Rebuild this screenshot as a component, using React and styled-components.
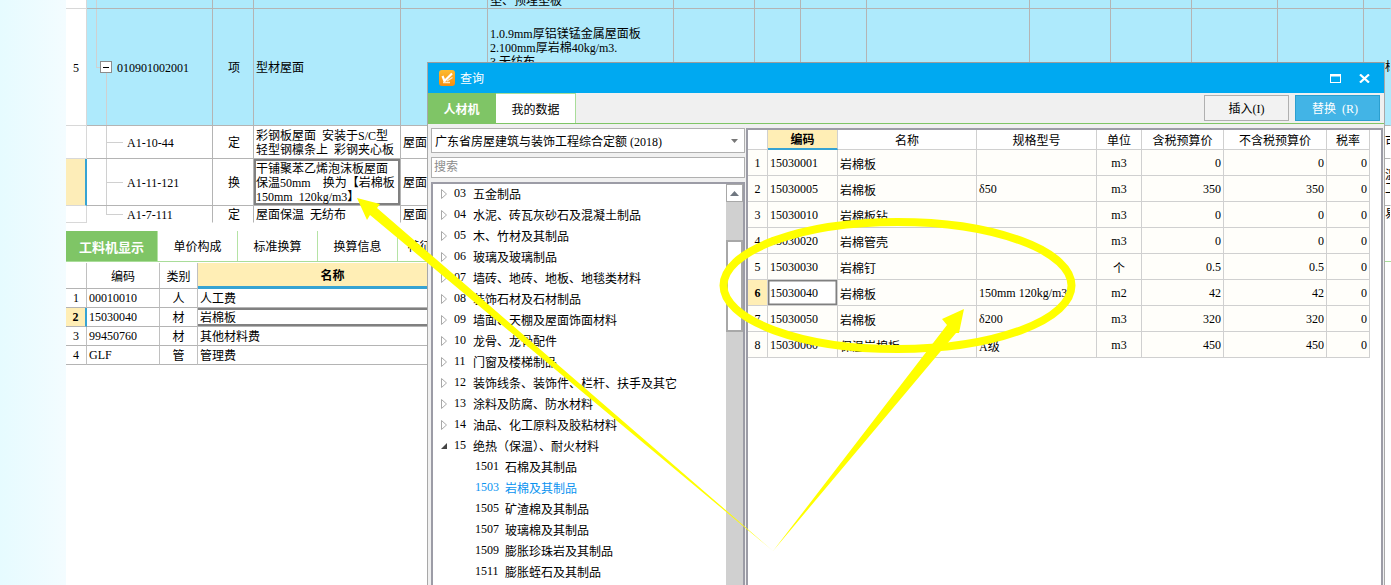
import React from "react";
import styled, { createGlobalStyle } from "styled-components";

const GlobalStyle = createGlobalStyle`
  html, body {
    margin: 0;
    padding: 0;
    overflow: hidden;
    background: #ffffff;
  }
  * {
    box-sizing: border-box;
  }
`;

const Page = styled.div`
  position: relative;
  display: flex;
  width: 1391px;
  height: 585px;
  overflow: hidden;
  font-family: "Liberation Serif", "Noto Sans CJK SC", serif;
  font-size: 12px;
  color: #000;
`;

const SideStrip = styled.div`
  width: 66px;
  flex: none;
  background: linear-gradient(90deg, #e6fbff, #f3fcff);
`;

const Main = styled.div`
  flex: 1;
  min-width: 0;
  display: flex;
  flex-direction: column;
  background: #fff;
`;

/* upper table behind the dialog */
const TopRow = styled.div`
  display: grid;
  grid-template-columns: 21px 126px 41px 147px 87px 186px 81px 46px 66px 163px 81px 81px 86px 86px 27px;
  height: ${(p) => p.$height}px;
  background: ${(p) => (p.$blue ? "#aeeafc" : "#fff")};
`;

const TopCell = styled.div`
  position: relative;
  display: flex;
  align-items: ${(p) => p.$valign || "center"};
  justify-content: ${(p) => (p.$center ? "center" : "flex-start")};
  padding: ${(p) => p.$pad || "2px 0 0 2px"};
  border-right: 1px solid ${(p) => (p.$last ? "transparent" : "#b4b4b4")};
  border-bottom: 1px solid ${(p) => (p.$noLine ? "transparent" : "#b4b4b4")};
  line-height: 14px;
  white-space: pre;
  overflow: ${(p) => (p.$tree ? "visible" : "hidden")};
  ${(p) => p.$selected && "box-shadow: inset 0 0 0 2px #808080;"}
`;

const RowNumCell = styled(TopCell)`
  justify-content: center;
  padding: 2px 0 0;
  background: ${(p) => (p.$active ? "#fdedb8" : "#fff")};
  border-color: #d8d8d8;
  ${(p) => p.$active && "border-right: 2px solid #36a3d3;"}
`;

const TreeCell = styled(TopCell)`
  padding-left: ${(p) => p.$indent}px;
  &::before {
    content: "";
    position: absolute;
    left: ${(p) => p.$stem}px;
    top: 0;
    bottom: ${(p) => p.$stemEnd || 0}px;
    width: 1px;
    background: #d0d0d0;
  }
  &::after {
    content: "";
    position: absolute;
    left: ${(p) => p.$stem}px;
    top: 50%;
    width: ${(p) => p.$branch}px;
    height: 1px;
    background: #d0d0d0;
  }
`;

const Collapse = styled.span`
  position: relative;
  z-index: 1;
  width: 12px;
  height: 12px;
  margin: -2px 5px 0 0;
  border: 1px solid #8c8c8c;
  background: #fff;
  display: flex;
  align-items: center;
  justify-content: center;
  &::before {
    content: "";
    width: 6px;
    height: 1px;
    background: #000;
  }
`;

const Stem = styled.span`
  position: absolute;
  left: 19px;
  top: 64px;
  bottom: 0;
  width: 1px;
  background: #d0d0d0;
`;

const CellLines = styled.div`
  display: flex;
  flex-direction: column;
`;

/* lower panel */
const Gap = styled.div`
  height: 8px;
`;

const TabBar = styled.div`
  display: flex;
  height: 31px;
  border-bottom: 1px solid #a9dd99;
  margin-bottom: 1px;
`;

const BottomTab = styled.div`
  width: ${(p) => (p.$active ? 92 : 80)}px;
  flex: none;
  display: flex;
  align-items: center;
  justify-content: center;
  background: ${(p) => (p.$active ? "#7fc566" : "#fff")};
  color: ${(p) => (p.$active ? "#fff" : "#000")};
  font-weight: ${(p) => (p.$active ? 700 : 400)};
  font-size: ${(p) => (p.$active ? 13 : 12)}px;
  border-right: 1px solid #b5e3a5;
`;

const PartsTable = styled.div`
  width: 850px;
`;

const PartsRow = styled.div`
  display: grid;
  grid-template-columns: 21px 73px 38px 270px 1fr;
  height: ${(p) => (p.$head ? 26 : 19)}px;
`;

const PartsCell = styled.div`
  display: flex;
  align-items: center;
  justify-content: ${(p) => (p.$center ? "center" : "flex-start")};
  padding-left: ${(p) => (p.$center ? 0 : 2)}px;
  border-right: 1px solid #c0c0c0;
  border-bottom: 1px solid #b4b4b4;
  background: ${(p) => (p.$hot ? "#ffeeb5" : "#fff")};
  font-weight: ${(p) => (p.$hot ? 700 : 400)};
  ${(p) => p.$head && p.$hot && "border-bottom: 3px solid #36a3d3;"}
  ${(p) => p.$selected && "box-shadow: inset 0 2px 0 #808080, inset 0 -2px 0 #808080;"}
  ${(p) => p.$marker && "border-right: 2px solid #36a3d3;"}
`;

/* dialog window */
const Dialog = styled.div`
  position: absolute;
  left: 427px;
  top: 62px;
  width: 958px;
  height: 530px;
  display: flex;
  flex-direction: column;
  background: #f0f0f0;
  border: 1px solid #a8a8a8;
  border-top-color: #9c9c9c;
`;

const TitleBar = styled.div`
  height: 30px;
  flex: none;
  display: flex;
  align-items: center;
  padding: 0 14px 0 11px;
  gap: 5px;
  background: #00a9f1;
  color: #fff;
`;

const TitleText = styled.span`
  flex: 1;
  font-size: 12px;
`;

const WindowButtons = styled.div`
  display: flex;
  align-items: center;
  gap: 18px;
`;

const DialogTabs = styled.div`
  height: 31px;
  flex: none;
  display: flex;
  align-items: stretch;
  border-bottom: 1px solid #7fc566;
`;

const DialogTab = styled.div`
  width: ${(p) => (p.$active ? 68 : 80)}px;
  display: flex;
  align-items: center;
  justify-content: center;
  padding-top: 1px;
  background: ${(p) => (p.$active ? "#7fc566" : "#fff")};
  color: ${(p) => (p.$active ? "#fff" : "#000")};
  font-weight: ${(p) => (p.$active ? 700 : 400)};
  border-top: 1px solid ${(p) => (p.$active ? "#7fc566" : "#a9dd99")};
  border-right: 1px solid ${(p) => (p.$active ? "#7fc566" : "#a9dd99")};
`;

const ActionGroup = styled.div`
  margin-left: auto;
  display: flex;
  gap: 6px;
  padding: 2px 4px 2px 0;
`;

const ActionButton = styled.div`
  width: 85px;
  display: flex;
  align-items: center;
  justify-content: center;
  white-space: pre;
  padding-right: ${(p) => (p.$primary ? 5 : 0)}px;
  background: ${(p) => (p.$primary ? "#42b4e6" : "#f2f2f2")};
  color: ${(p) => (p.$primary ? "#fff" : "#000")};
  border: 1px solid ${(p) => (p.$primary ? "#2b9fd0" : "#b0b0b0")};
`;

const DialogBody = styled.div`
  flex: 1;
  min-height: 0;
  display: flex;
  gap: 1px;
  padding: 4px 1px 0 3px;
`;

const LeftPanel = styled.div`
  width: 314px;
  flex: none;
  display: flex;
  flex-direction: column;
  gap: 4px;
`;

const SelectBox = styled.div`
  height: 25px;
  flex: none;
  display: flex;
  align-items: center;
  justify-content: space-between;
  padding: 0 6px 0 3px;
  background: #fff;
  border: 1px solid #b0b0b0;
`;

const SearchInput = styled.input`
  height: 21px;
  flex: none;
  width: 100%;
  padding: 0 2px;
  border: 1px solid #b0b0b0;
  background: #fff;
  outline: none;
  font: inherit;
  &::placeholder {
    color: #8c8c8c;
    opacity: 1;
  }
`;

const TreePanel = styled.div`
  flex: 1;
  min-height: 0;
  display: flex;
  background: #fff;
  border: 2px solid #9c9ca6;
`;

const TreeList = styled.div`
  flex: 1;
  min-width: 0;
  padding-left: 8px;
  overflow: hidden;
`;

const TreeRow = styled.div`
  height: 21px;
  display: flex;
  align-items: center;
  white-space: nowrap;
  padding: 0 0 2px ${(p) => (p.$child ? 34 : 0)}px;
  color: ${(p) => (p.$current ? "#0a93f0" : "#000")};
`;

const TreeToggle = styled.svg`
  width: 6px;
  height: 10px;
  flex: none;
  margin-right: 7px;
`;

const TreeNumber = styled.span`
  width: ${(p) => (p.$child ? 30 : 19)}px;
  flex: none;
`;

const Scrollbar = styled.div`
  width: 17px;
  flex: none;
  display: flex;
  flex-direction: column;
  background: #d0d0d0;
`;

const ScrollUp = styled.div`
  height: 18px;
  flex: none;
  display: flex;
  align-items: center;
  justify-content: center;
  background: #fff;
  border: 1px solid #a8a8a8;
`;

const ScrollThumb = styled.div`
  height: 92px;
  flex: none;
  margin-top: 38px;
  background: #fff;
  border: 2px solid #a8a8a8;
`;

const RightPanel = styled.div`
  flex: 1;
  min-width: 0;
  background: #fff;
  border: 2px solid #9c9ca6;
  border-bottom: none;
`;

const ResultRow = styled.div`
  display: grid;
  grid-template-columns: 20px 70px 139px 120px 45px 82px 103px 43px;
  width: 622px;
  height: ${(p) => (p.$head ? 20 : 26)}px;
`;

const ResultCell = styled.div`
  display: flex;
  align-items: center;
  justify-content: ${(p) => (p.$align === "right" ? "flex-end" : p.$align === "center" ? "center" : "flex-start")};
  padding: ${(p) => (p.$head ? 0 : "2px")} ${(p) => (p.$align === "right" ? "2px" : 0)} 0 ${(p) => (p.$align ? 0 : "2px")};
  background: ${(p) => (p.$hot ? "#ffeeb5" : p.$head ? "#fff" : "#fffefa")};
  font-weight: ${(p) => (p.$hot ? 700 : 400)};
  border-right: 1px solid #d0d0d0;
  border-bottom: 1px solid #d0d0d0;
  ${(p) => p.$head && p.$hot && "border-bottom: 2px solid #36a3d3;"}
  ${(p) => p.$selected && "box-shadow: inset 0 0 0 1.5px #808080; background: #fff;"}
`;

const Annotations = styled.svg`
  position: absolute;
  left: 0;
  top: 0;
  width: 1391px;
  height: 585px;
  pointer-events: none;
`;

const treeItems = [
  ["03", "五金制品"],
  ["04", "水泥、砖瓦灰砂石及混凝土制品"],
  ["05", "木、竹材及其制品"],
  ["06", "玻璃及玻璃制品"],
  ["07", "墙砖、地砖、地板、地毯类材料"],
  ["08", "装饰石材及石材制品"],
  ["09", "墙面、天棚及屋面饰面材料"],
  ["10", "龙骨、龙骨配件"],
  ["11", "门窗及楼梯制品"],
  ["12", "装饰线条、装饰件、栏杆、扶手及其它"],
  ["13", "涂料及防腐、防水材料"],
  ["14", "油品、化工原料及胶粘材料"],
];

const treeChildren = [
  ["1501", "石棉及其制品"],
  ["1503", "岩棉及其制品", true],
  ["1505", "矿渣棉及其制品"],
  ["1507", "玻璃棉及其制品"],
  ["1509", "膨胀珍珠岩及其制品"],
  ["1511", "膨胀蛭石及其制品"],
];

const resultHead = ["", "编码", "名称", "规格型号", "单位", "含税预算价", "不含税预算价", "税率"];

const results = [
  ["15030001", "岩棉板", "", "m3", "0", "0", "0"],
  ["15030005", "岩棉板", "δ50", "m3", "350", "350", "0"],
  ["15030010", "岩棉板钻", "", "m3", "0", "0", "0"],
  ["15030020", "岩棉管壳", "", "m3", "0", "0", "0"],
  ["15030030", "岩棉钉", "", "个", "0.5", "0.5", "0"],
  ["15030040", "岩棉板", "150mm 120kg/m3", "m2", "42", "42", "0"],
  ["15030050", "岩棉板", "δ200", "m3", "320", "320", "0"],
  ["15030060", "保温岩棉板", "A级", "m3", "450", "450", "0"],
];

const parts = [
  ["00010010", "人", "人工费"],
  ["15030040", "材", "岩棉板"],
  ["99450760", "材", "其他材料费"],
  ["GLF", "管", "管理费"],
];

const bottomTabs = ["单价构成", "标准换算", "换算信息", "特征及内容"];

const emptyCells = (count, props) =>
  Array.from({ length: count }, (_, i) => <TopCell key={i} {...props} />);

const Lines = ({ items }) => (
  <CellLines>
    {items.map((line) => (
      <span key={line}>{line}</span>
    ))}
  </CellLines>
);

const AppIcon = () => (
  <svg width="16" height="16" viewBox="0 0 16 16">
    <defs>
      <linearGradient id="appIconFill" x1="0" y1="0" x2="0" y2="1">
        <stop offset="0" stopColor="#fdbb2f" />
        <stop offset="1" stopColor="#f68d0e" />
      </linearGradient>
    </defs>
    <rect width="16" height="16" rx="3" fill="url(#appIconFill)" />
    <path d="M3.5 6 L5.5 11 L13 3.5" fill="none" stroke="#fff" strokeWidth="2.2" />
    <path d="M8 11 L13.5 7.5 M4 12.5 H11" stroke="#ffe9c4" strokeWidth="1.3" />
  </svg>
);

const MaximizeIcon = () => (
  <svg width="11" height="9" viewBox="0 0 11 9">
    <rect x="0.5" y="0.5" width="10" height="8" fill="none" stroke="#fff" />
    <rect x="0" y="0" width="11" height="2.5" fill="#fff" />
  </svg>
);

const CloseIcon = () => (
  <svg width="11" height="9" viewBox="0 0 11 9">
    <path d="M1 0.5 L10 8.5 M10 0.5 L1 8.5" stroke="#fff" strokeWidth="2.2" />
  </svg>
);

const Caret = () => (
  <svg width="7" height="4" viewBox="0 0 7 4">
    <path d="M0 0h7L3.5 4z" fill="#777" />
  </svg>
);

const CollapsedIcon = () => (
  <TreeToggle viewBox="0 0 6 10">
    <path d="M0.5 0.5 L5.5 5 L0.5 9.5z" fill="#fff" stroke="#a8a8a8" />
  </TreeToggle>
);

const ExpandedIcon = () => (
  <TreeToggle viewBox="0 0 6 10">
    <path d="M6 2 V8 H0z" fill="#444" />
  </TreeToggle>
);

const App = () => (
  <Page>
    <GlobalStyle />
    <SideStrip />
    <Main>
      <TopRow $blue $height={9}>
        <RowNumCell />
        <TreeCell $tree $indent={0} $stem={9} $branch={0} />
        <TopCell />
        <TopCell />
        <TopCell />
        <TopCell $valign="flex-end" $pad="0 0 0 2px">垫、预埋垫板</TopCell>
        {emptyCells(8)}
        <TopCell $last />
      </TopRow>
      <TopRow $blue $height={117}>
        <RowNumCell>5</RowNumCell>
        <TreeCell $tree $indent={13} $stem={9} $stemEnd={57} $branch={5}>
          <Collapse />
          010901002001
          <Stem />
        </TreeCell>
        <TopCell $center>项</TopCell>
        <TopCell>型材屋面</TopCell>
        <TopCell />
        <TopCell $valign="flex-start" $pad="18px 0 0 2px">
          <Lines items={["1.0.9mm厚铝镁锰金属屋面板", "2.100mm厚岩棉40kg/m3.", "3.无纺布"]} />
        </TopCell>
        {emptyCells(8)}
        <TopCell $last $pad="0 0 0 21px">标</TopCell>
      </TopRow>
      <TopRow $height={33}>
        <RowNumCell />
        <TreeCell $tree $indent={40} $stem={19} $branch={17}>A1-10-44</TreeCell>
        <TopCell $center>定</TopCell>
        <TopCell>
          <Lines items={["彩钢板屋面  安装于S/C型", "轻型钢檩条上  彩钢夹心板"]} />
        </TopCell>
        <TopCell>屋面</TopCell>
        {emptyCells(9)}
        <TopCell $last $pad="0 0 0 21px">可</TopCell>
      </TopRow>
      <TopRow $height={47}>
        <RowNumCell $active />
        <TreeCell $tree $indent={40} $stem={19} $branch={17}>A1-11-121</TreeCell>
        <TopCell $center>换</TopCell>
        <TopCell $selected>
          <Lines items={["干铺聚苯乙烯泡沫板屋面", "保温50mm    换为【岩棉板", "150mm  120kg/m3】"]} />
        </TopCell>
        <TopCell>屋面</TopCell>
        {emptyCells(9)}
        <TopCell $last $pad="0 0 0 21px">
          <Lines items={["温", "工"]} />
        </TopCell>
      </TopRow>
      <TopRow $height={17}>
        <RowNumCell $noLine />
        <TreeCell $tree $noLine $indent={40} $stem={19} $stemEnd={8} $branch={17}>A1-7-111</TreeCell>
        <TopCell $center $noLine>定</TopCell>
        <TopCell $noLine>屋面保温  无纺布</TopCell>
        <TopCell $noLine>屋面</TopCell>
        {emptyCells(9, { $noLine: true })}
        <TopCell $last $noLine $pad="0 0 0 21px">易</TopCell>
      </TopRow>
      <Gap />
      <TabBar>
        <BottomTab $active>工料机显示</BottomTab>
        {bottomTabs.map((name) => (
          <BottomTab key={name}>{name}</BottomTab>
        ))}
      </TabBar>
      <PartsTable>
        <PartsRow $head>
          <PartsCell $head />
          <PartsCell $head $center>编码</PartsCell>
          <PartsCell $head $center>类别</PartsCell>
          <PartsCell $head $center $hot>名称</PartsCell>
          <PartsCell $head />
        </PartsRow>
        {parts.map(([code, kind, name], i) => (
          <PartsRow key={code}>
            <PartsCell $center $hot={i === 1} $marker={i === 1}>{i + 1}</PartsCell>
            <PartsCell>{code}</PartsCell>
            <PartsCell $center>{kind}</PartsCell>
            <PartsCell $selected={i === 1}>{name}</PartsCell>
            <PartsCell $selected={i === 1} />
          </PartsRow>
        ))}
      </PartsTable>
    </Main>

    <Dialog>
      <TitleBar>
        <AppIcon />
        <TitleText>查询</TitleText>
        <WindowButtons>
          <MaximizeIcon />
          <CloseIcon />
        </WindowButtons>
      </TitleBar>
      <DialogTabs>
        <DialogTab $active>人材机</DialogTab>
        <DialogTab>我的数据</DialogTab>
        <ActionGroup>
          <ActionButton>插入(I)</ActionButton>
          <ActionButton $primary>{"替换  (R)"}</ActionButton>
        </ActionGroup>
      </DialogTabs>
      <DialogBody>
        <LeftPanel>
          <SelectBox>
            <span>广东省房屋建筑与装饰工程综合定额 (2018)</span>
            <Caret />
          </SelectBox>
          <SearchInput placeholder="搜索" readOnly />
          <TreePanel>
            <TreeList>
              {treeItems.map(([num, name]) => (
                <TreeRow key={num}>
                  <CollapsedIcon />
                  <TreeNumber>{num}</TreeNumber>
                  {name}
                </TreeRow>
              ))}
              <TreeRow>
                <ExpandedIcon />
                <TreeNumber>15</TreeNumber>
                绝热（保温）、耐火材料
              </TreeRow>
              {treeChildren.map(([num, name, current]) => (
                <TreeRow key={num} $child $current={current}>
                  <TreeNumber $child>{num}</TreeNumber>
                  {name}
                </TreeRow>
              ))}
            </TreeList>
            <Scrollbar>
              <ScrollUp>
                <svg width="9" height="5" viewBox="0 0 9 5">
                  <path d="M0 5h9L4.5 0z" fill="#6f7780" />
                </svg>
              </ScrollUp>
              <ScrollThumb />
            </Scrollbar>
          </TreePanel>
        </LeftPanel>
        <RightPanel>
          <ResultRow $head>
            {resultHead.map((title, i) => (
              <ResultCell key={title || "num"} $head $align="center" $hot={i === 1}>{title}</ResultCell>
            ))}
          </ResultRow>
          {results.map(([code, name, spec, unit, taxed, untaxed, rate], i) => (
            <ResultRow key={code}>
              <ResultCell $align="center" $hot={i === 5}>{i + 1}</ResultCell>
              <ResultCell $selected={i === 5}>{code}</ResultCell>
              <ResultCell>{name}</ResultCell>
              <ResultCell>{spec}</ResultCell>
              <ResultCell $align="center">{unit}</ResultCell>
              <ResultCell $align="right">{taxed}</ResultCell>
              <ResultCell $align="right">{untaxed}</ResultCell>
              <ResultCell $align="right">{rate}</ResultCell>
            </ResultRow>
          ))}
        </RightPanel>
      </DialogBody>
    </Dialog>

    <Annotations viewBox="0 0 1391 585">
      <ellipse cx="897.5" cy="285.5" rx="174" ry="63.5" fill="none" stroke="#ffff00" strokeWidth="8" />
      <polygon points="357,198 380,204 377,208 773,551 370,215 367,220" fill="#ffff00" />
      <polygon points="964,309 942,319 947,325 773,551 956,333 959,333" fill="#ffff00" />
    </Annotations>
  </Page>
);

export default App;
